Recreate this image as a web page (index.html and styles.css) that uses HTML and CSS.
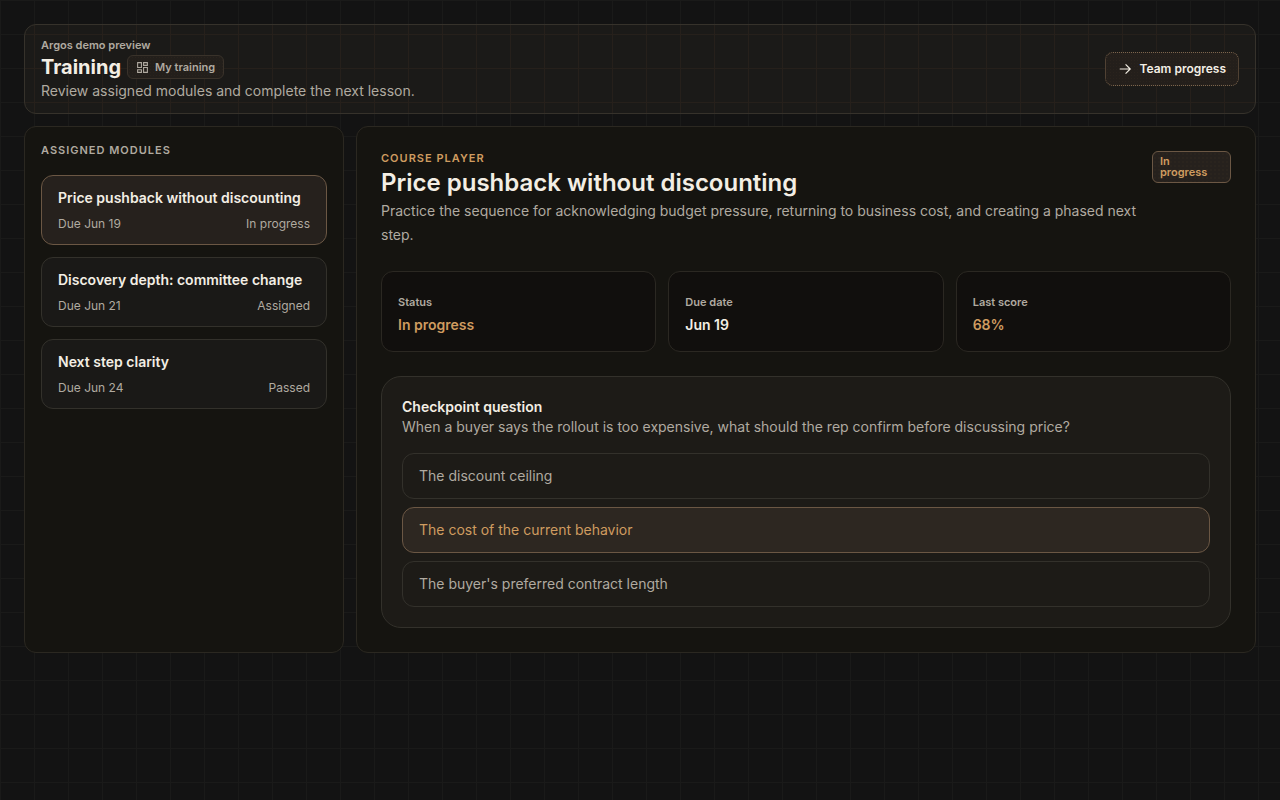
FILE: index.html
```html
<!DOCTYPE html>
<html lang="en">
<head>
<meta charset="utf-8">
<meta name="viewport" content="width=device-width, initial-scale=1">
<title>Training</title>
<link rel="stylesheet" href="styles.css">
</head>
<body>
<div class="page">
  <header class="topbar">
    <div class="topbar-text">
      <p class="overline">Argos demo preview</p>
      <div class="title-row">
        <h1 class="page-title">Training</h1>
        <span class="chip">
          <svg class="chip-icon" viewBox="0 0 24 24" aria-hidden="true"><path d="M3 3h7v9H3zM14 3h7v5h-7zM14 12h7v9h-7zM3 16h7v5H3z"/></svg>
          My training
        </span>
      </div>
      <p class="page-desc">Review assigned modules and complete the next lesson.</p>
    </div>
    <button type="button" class="team-button">
      <svg class="arrow-icon" viewBox="0 0 24 24" aria-hidden="true"><path d="M3 12h18M13 4l8 8-8 8"/></svg>
      Team progress
    </button>
  </header>
  <main class="columns">
    <aside class="panel modules">
      <h2 class="modules-title">Assigned modules</h2>
      <div class="module-list">
        <button type="button" class="module module-active">
          <span class="module-name">Price pushback without discounting</span>
          <span class="module-meta"><span>Due Jun 19</span><span>In progress</span></span>
        </button>
        <button type="button" class="module">
          <span class="module-name">Discovery depth: committee change</span>
          <span class="module-meta"><span>Due Jun 21</span><span>Assigned</span></span>
        </button>
        <button type="button" class="module">
          <span class="module-name">Next step clarity</span>
          <span class="module-meta"><span>Due Jun 24</span><span>Passed</span></span>
        </button>
      </div>
    </aside>
    <section class="panel player">
      <div class="player-head">
        <div class="player-intro">
          <p class="eyebrow">Course player</p>
          <h2 class="player-title">Price pushback without discounting</h2>
          <p class="player-desc">Practice the sequence for acknowledging budget pressure, returning to business cost, and creating a phased next step.</p>
        </div>
        <span class="badge"><span class="badge-text">In progress</span></span>
      </div>
      <dl class="stats">
        <div class="stat"><dt>Status</dt><dd class="accent">In progress</dd></div>
        <div class="stat"><dt>Due date</dt><dd>Jun 19</dd></div>
        <div class="stat"><dt>Last score</dt><dd class="accent">68%</dd></div>
      </dl>
      <div class="question">
        <h3 class="question-title">Checkpoint question</h3>
        <p class="question-text">When a buyer says the rollout is too expensive, what should the rep confirm before discussing price?</p>
        <div class="options">
          <button type="button" class="option">The discount ceiling</button>
          <button type="button" class="option option-active">The cost of the current behavior</button>
          <button type="button" class="option">The buyer's preferred contract length</button>
        </div>
      </div>
    </section>
  </main>
</div>
</body>
</html>
```

FILE: styles.css
```css
* { box-sizing: border-box; }
body, h1, h2, h3, p, dl, dd { margin: 0; }
body {
  min-height: 100vh;
  background-color: #131313;
  background-image:
    linear-gradient(to right, #1a1a19 1px, transparent 1px),
    linear-gradient(to bottom, #1a1a19 1px, transparent 1px);
  background-size: 34px 34px;
  color: #f3eee4;
  font-family: Inter, "Liberation Sans", sans-serif;
  font-size: 14px;
  line-height: 20px;
}
button { font: inherit; color: inherit; cursor: pointer; }
svg { fill: none; stroke: currentColor; stroke-width: 2; }

.page { padding: 24px; display: flex; flex-direction: column; gap: 12px; }

.topbar {
  display: flex;
  align-items: center;
  justify-content: space-between;
  gap: 24px;
  padding: 12px 16px;
  border: 1px solid #36322b;
  border-radius: 12px;
  background-color: #1b1a18;
  background-image:
    linear-gradient(to right, #26201b 1px, transparent 1px),
    linear-gradient(to bottom, #26201b 1px, transparent 1px);
  background-size: 34px 34px;
  background-position: 9px 9px;
}
.topbar-text { display: flex; flex-direction: column; gap: 2px; }
.overline { font-size: 11px; line-height: 16px; font-weight: 600; color: #b0aaa0; }
.title-row { display: flex; align-items: center; gap: 6px; }
.page-title { font-size: 20px; line-height: 24px; font-weight: 700; }
.page-desc { color: #b0aaa0; }
.chip {
  display: flex;
  align-items: center;
  gap: 6px;
  padding: 3px 8px;
  border: 1px solid #39322a;
  border-radius: 6px;
  background: radial-gradient(#2a231d 1px, transparent 1px) 0 0 / 3px 3px, #231f1b;
  color: #b0aaa0;
  font-size: 11px;
  line-height: 16px;
  font-weight: 600;
}
.chip-icon { width: 13px; height: 13px; }
.team-button {
  display: flex;
  align-items: center;
  gap: 8px;
  padding: 6px 12px;
  border: 1px dotted #7c654d;
  border-radius: 8px;
  background: radial-gradient(#2a231d 1px, transparent 1px) 0 0 / 3px 3px, #241f1b;
  font-size: 12px;
  font-weight: 600;
}
.arrow-icon { width: 14px; height: 14px; }

.columns { display: grid; grid-template-columns: 320px 1fr; gap: 12px; }
.panel { border: 1px solid #2b2821; border-radius: 12px; background: #151410; }
.modules { padding: 16px; display: flex; flex-direction: column; gap: 18px; }
.modules-title {
  font-size: 11px;
  line-height: 14px;
  font-weight: 600;
  letter-spacing: 1px;
  text-transform: uppercase;
  color: #b0aaa0;
}
.module-list { display: flex; flex-direction: column; gap: 12px; }
.module {
  display: flex;
  flex-direction: column;
  gap: 8px;
  padding: 12px 16px;
  border: 1px solid #33312b;
  border-radius: 12px;
  background: #1a1917;
  text-align: left;
}
.module-active { background: #26211d; border-color: #6b5744; }
.module-name { font-weight: 600; }
.module-meta {
  display: flex;
  justify-content: space-between;
  font-size: 12px;
  line-height: 16px;
  color: #b0aaa0;
}

.player { padding: 24px; display: flex; flex-direction: column; gap: 24px; }
.player-head { display: flex; align-items: flex-start; justify-content: space-between; gap: 12px; }
.player-intro { flex: 1; }
.eyebrow {
  margin-bottom: 2px;
  font-size: 11px;
  line-height: 14px;
  font-weight: 600;
  letter-spacing: 1px;
  text-transform: uppercase;
  color: #cf9c60;
}
.player-title { font-size: 24px; line-height: 32px; font-weight: 600; }
.player-desc { line-height: 24px; color: #b0aaa0; }
.badge {
  flex: 0 0 79px;
  padding: 4px 7px;
  border: 1px solid #6b5744;
  border-radius: 6px;
  background: radial-gradient(#2a241e 1px, transparent 1px) 0 0 / 4px 4px, #26211d;
  color: #cf9c60;
  font-size: 11px;
  line-height: 11px;
  font-weight: 600;
}
.badge-text { display: block; width: min-content; }

.stats { display: grid; grid-template-columns: repeat(3, 1fr); gap: 12px; }
.stat { padding: 20px 16px 14px; border: 1px solid #2b2822; border-radius: 12px; background: #110f0d; }
.stat dt { margin-bottom: 1px; font-size: 11px; line-height: 20px; font-weight: 600; color: #b0aaa0; }
.stat dd { line-height: 24px; font-weight: 600; }
.stat .accent { color: #cf9c60; }

.question { padding: 20px; border: 1px solid #33312b; border-radius: 20px; background: #1d1b17; }
.question-title { font-size: 14px; line-height: 20px; font-weight: 600; }
.question-text { color: #b0aaa0; }
.options { display: flex; flex-direction: column; gap: 8px; margin-top: 16px; }
.option {
  padding: 12px 16px;
  border: 1px solid #33312b;
  border-radius: 12px;
  background: transparent;
  color: #b0aaa0;
  text-align: left;
}
.option-active { background: #2d2721; border-color: #6b5744; color: #cf9c60; }
```
